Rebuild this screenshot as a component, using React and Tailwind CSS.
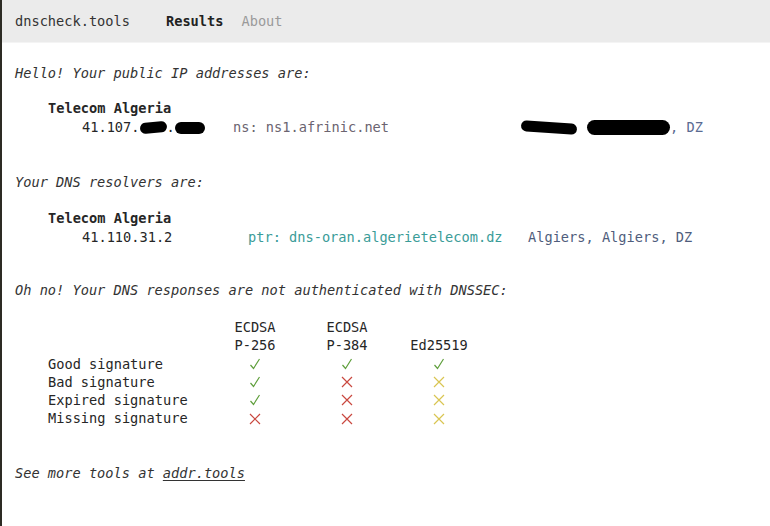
import React from "react";

const mono = { fontFamily: '"DejaVu Sans Mono", "Liberation Mono", monospace' };

function Check() {
  return (
    <svg width="12" height="12" viewBox="0 0 12 12" className="inline-block">
      <path d="M1.5 7 L4.5 10.5 L10.5 1" fill="none" stroke="#5f9f3c" strokeWidth="1.2" />
    </svg>
  );
}
function Cross({ color }) {
  return (
    <svg width="12" height="12" viewBox="0 0 12 12" className="inline-block">
      <path d="M1 1 L11 11 M11 1 L1 11" fill="none" stroke={color} strokeWidth="1.2" />
    </svg>
  );
}
const R = () => <Cross color="#c9483f" />;
const Y = () => <Cross color="#d9c552" />;
const G = () => <Check />;

function Blob({ w, h = 12, className = "" }) {
  return (
    <span
      className={"inline-block bg-black align-middle rounded-[6px] " + className}
      style={{ width: w, height: h }}
    />
  );
}

export default function App() {
  const rows = [
    ["Good signature", G, G, G],
    ["Bad signature", G, R, Y],
    ["Expired signature", G, R, Y],
    ["Missing signature", R, R, Y],
  ];
  return (
    <div className="w-[770px] h-[526px] bg-white border-l-2 border-[#2d2b24] text-[13.65px] text-[#262626] overflow-hidden" style={mono}>
      <div className="h-[43px] bg-[#ebebeb] border-b border-[#f4f4f4] flex items-center pl-[13px]">
        <span className="text-[#333]">dnscheck.tools</span>
        <span className="ml-[36px] font-bold text-[#222]">Results</span>
        <span className="ml-[18px] text-[#9a9a9a]">About</span>
      </div>

      <div className="pl-[13px] leading-[19px]">
        <div className="mt-[21px] italic text-[#333]">Hello! Your public IP addresses are:</div>
        <div className="mt-[16px] pl-[33px] font-bold">Telecom Algeria</div>
        <div className="flex pl-[67px] whitespace-pre">
          <div className="w-[151px] flex items-center">
            <span>41.107.</span>
            <Blob w={27} h={11} className="rotate-[-6deg]" />
            <span>.</span>
            <Blob w={30} h={12} className="rounded-[3px]" />
          </div>
          <div className="w-[288px] text-[#6b6470]">ns: ns1.afrinic.net</div>
          <div className="flex items-center text-[#5a6b92]">
            <Blob w={56} h={11} className="rotate-[4deg]" />
            <span className="w-[10px]" />
            <Blob w={83} h={15} className="rounded-[8px]" />
            <span>, DZ</span>
          </div>
        </div>

        <div className="mt-[36px] italic text-[#333]">Your DNS resolvers are:</div>
        <div className="mt-[17px] pl-[33px] font-bold">Telecom Algeria</div>
        <div className="flex pl-[67px] whitespace-pre">
          <div className="w-[166px]">41.110.31.2</div>
          <div className="w-[280px] text-[#3a9c98]">ptr: dns-oran.algerietelecom.dz</div>
          <div className="text-[#4f5d7c]">Algiers, Algiers, DZ</div>
        </div>

        <div className="mt-[34px] italic text-[#333]">Oh no! Your DNS responses are not authenticated with DNSSEC:</div>

        <div className="mt-[18px] pl-[33px] leading-[18.3px]">
          <div className="grid grid-cols-[161px_92px_92px_92px]">
            <div />
            <div className="text-center">ECDSA<br />P-256</div>
            <div className="text-center">ECDSA<br />P-384</div>
            <div className="text-center flex items-end justify-center">Ed25519</div>
            {rows.map(([label, A, B, C]) => (
              <React.Fragment key={label}>
                <div>{label}</div>
                <div className="flex items-center justify-center"><A /></div>
                <div className="flex items-center justify-center"><B /></div>
                <div className="flex items-center justify-center"><C /></div>
              </React.Fragment>
            ))}
          </div>
        </div>

        <div className="mt-[36px] italic text-[#333]">
          See more tools at <span className="underline underline-offset-2">addr.tools</span>
        </div>
      </div>
    </div>
  );
}
